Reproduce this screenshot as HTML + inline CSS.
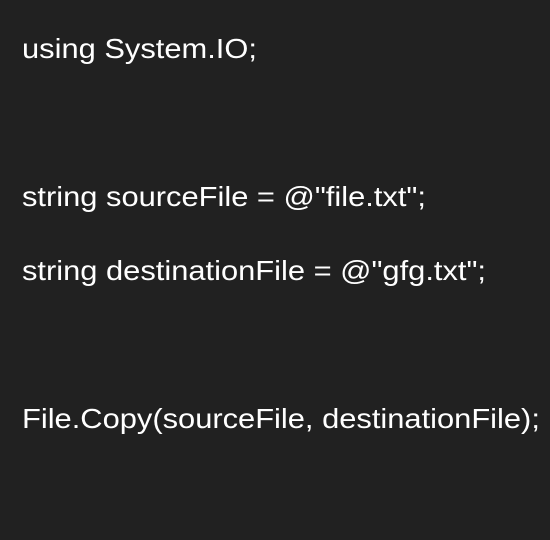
<!DOCTYPE html>
<html><head><style>
html,body{margin:0;padding:0;background:#212121;width:550px;height:540px;overflow:hidden}
div{position:absolute;left:22px;color:#fff;font-family:"Liberation Sans",Arial,sans-serif;font-size:28px;line-height:28px;white-space:pre;transform:scaleX(1.102);transform-origin:0 0}
</style></head><body>
<div style="top:35px">using System.IO;</div>
<div style="top:183px">string sourceFile = @"file.txt";</div>
<div style="top:257px">string destinationFile = @"gfg.txt";</div>
<div style="top:405px">File.Copy(sourceFile, destinationFile);</div>
</body></html>
